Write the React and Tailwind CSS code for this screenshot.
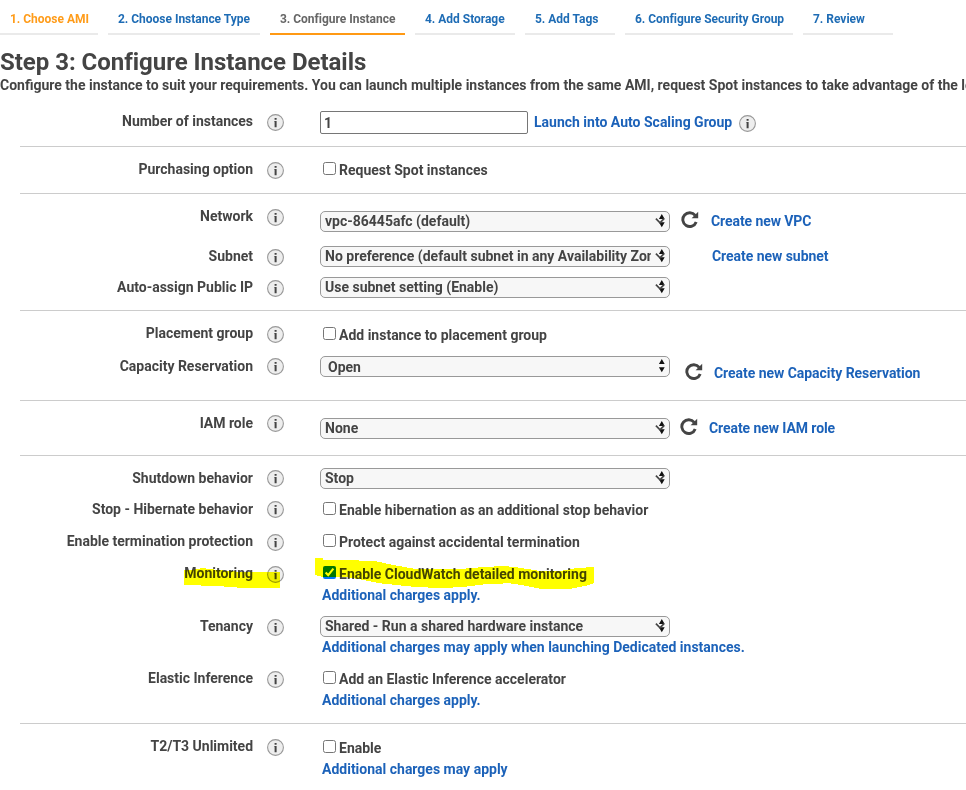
import React from "react";

const steps = [
  { label: "1. Choose AMI", box: "w-[98px] border-[#eaeaea] text-[#ff9c1a]" },
  { label: "2. Choose Instance Type", box: "w-[152px] border-[#eaeaea] text-[#1e6cb5]" },
  { label: "3. Configure Instance", box: "w-[135px] border-[#ff9914] text-[#666]" },
  { label: "4. Add Storage", box: "w-[100px] border-[#eaeaea] text-[#1e6cb5]" },
  { label: "5. Add Tags", box: "w-[90px] border-[#eaeaea] text-[#1e6cb5]" },
  { label: "6. Configure Security Group", box: "w-[168px] border-[#eaeaea] text-[#1e6cb5]" },
  { label: "7. Review", box: "w-[90px] border-[#eaeaea] text-[#1e6cb5]" },
];

function Info({ className = "" }) {
  return (
    <svg className={`h-[17px] w-[17px] shrink-0 ${className}`} viewBox="0 0 17 17">
      <circle cx="8.5" cy="8.5" r="7.9" fill="#eee" stroke="#999" strokeWidth="1.1" />
      <path d="M7.6 4h2v1.8h-2zM7.1 7h2.5v6.3H7.6V7.6h-.5z" fill="#444" />
    </svg>
  );
}

function Refresh({ className = "" }) {
  return (
    <svg className={`h-[18px] w-[18px] shrink-0 ${className}`} viewBox="0 0 18 18">
      <path d="M14.2 4.4A6.9 6.9 0 1 0 15.2 11" fill="none" stroke="#444" strokeWidth="2.9" />
      <path d="M17.2.8V7.3H10.6z" fill="#444" />
    </svg>
  );
}

function Row({ label, height, iconTop = "mt-[3px]", children }) {
  return (
    <div className={`flex items-start ${height}`}>
      <div className="w-[233px] shrink-0 text-right tracking-[-0.01px]">{label}</div>
      <Info className={`ml-[14px] mr-9 ${iconTop}`} />
      {children}
    </div>
  );
}

function Select({ text, className = "", pad = "pl-1 leading-[18px]", plain = false }) {
  return (
    <div className={`flex h-[21px] w-[350px] shrink-0 items-start rounded-[5px] border border-[#999] bg-[#f7f7f7] ${className}`}>
      <span className={`h-[19px] w-[330px] overflow-hidden whitespace-nowrap ${pad}`}>{text}</span>
      <svg className="ml-[3px] h-[19px] w-[12px] shrink-0" viewBox="0 0 12 19">
        <path d="M7.8 2L10.7 7H4.9zM7.8 15.2L4.9 10.2h5.8z" fill="#111" />
        {!plain && <path d="M1.9 6.7L6 10.8 10.1 6.7" fill="none" stroke="#444" strokeWidth="1.7" />}
      </svg>
    </div>
  );
}

function Check({ text, boxTop, textTop = "mt-px", noteTop = "mt-px", checked = false, note }) {
  return (
    <div className="flex flex-col">
      <label className="flex h-[21px] items-start">
        <input type="checkbox" defaultChecked={checked} className={`ml-[3px] mr-[3px] h-[13px] w-[13px] ${boxTop}`} />
        <span className={textTop}>{text}</span>
      </label>
      {note && <Link className={`ml-0.5 ${noteTop}`}>{note}</Link>}
    </div>
  );
}

function Link({ className = "", children }) {
  return <a className={`whitespace-nowrap text-[#1c62b9] ${className}`}>{children}</a>;
}

function Section({ className, children }) {
  return <section className={`ml-5 border-b border-[#ccc] ${className}`}>{children}</section>;
}

export default function App() {
  return (
    <main className="relative h-[790px] w-[966px] overflow-hidden bg-white font-['Roboto',sans-serif] text-[14px] font-bold leading-5 text-[#444]">
      <nav className="flex h-[35px] gap-2.5 text-[12px] tracking-[-0.02px]">
        {steps.map((s) => (
          <div key={s.label} className={`h-[35px] shrink-0 whitespace-nowrap border-b-2 pl-2.5 pt-[9px] ${s.box}`}>
            {s.label}
          </div>
        ))}
      </nav>
      <h1 className="mt-[13px] h-[27px] text-[24px] font-bold leading-7 tracking-[-0.03px]">Step 3: Configure Instance Details</h1>
      <p className="h-9 whitespace-nowrap">
        Configure the instance to suit your requirements. You can launch multiple instances from the same AMI, request Spot instances to take advantage of the lower pricing
      </p>

      <Section className="h-[36px]">
        <Row label="Number of instances" height="h-[35px]">
          <input
            defaultValue="1"
            className="h-[23px] w-[208px] rounded-[2px] border border-[#767676] bg-white pl-[3px]"
          />
          <Link className="ml-1.5 mt-px">Launch into Auto Scaling Group</Link>
          <Info className="ml-[7px] mt-1" />
        </Row>
      </Section>

      <Section className="h-[47px] pt-3">
        <Row label="Purchasing option" height="h-[34px]">
          <Check text="Request Spot instances" boxTop="mt-[3px]" />
        </Row>
      </Section>

      <Section className="h-[117px] pt-3">
        <Row label="Network" height="h-10">
          <Select text="vpc-86445afc (default)" className="mt-[5px]" />
          <Refresh className="ml-[11px] mt-[5px]" />
          <Link className="ml-3 mt-[5px] tracking-[-0.08px]">Create new VPC</Link>
        </Row>
        <Row label="Subnet" height="h-[31px]">
          <Select text="No preference (default subnet in any Availability Zone)" />
          <Link className="ml-[42px] tracking-[-0.04px]">Create new subnet</Link>
        </Row>
        <Row label="Auto-assign Public IP" height="h-[33px]">
          <Select text="Use subnet setting (Enable)" />
        </Row>
      </Section>

      <Section className="h-[90px] pt-3">
        <Row label="Placement group" height="h-[33px]">
          <Check text="Add instance to placement group" boxTop="mt-1" textTop="mt-0.5" />
        </Row>
        <Row label="Capacity Reservation" height="h-11" iconTop="mt-0.5">
          <Select text="Open" pad="pl-[7px] leading-5" plain />
          <Refresh className="ml-[15px] mt-[7px]" />
          <Link className="ml-[11px] mt-[7px] tracking-[-0.04px]">Create new Capacity Reservation</Link>
        </Row>
      </Section>

      <Section className="h-[55px] pt-3">
        <Row label="IAM role" height="h-[42px]" iconTop="mt-0.5">
          <Select text="None" className="mt-[5px]" />
          <Refresh className="ml-[10px] mt-[5px]" />
          <Link className="ml-[11px] mt-[5px] tracking-[-0.08px]">Create new IAM role</Link>
        </Row>
      </Section>

      <Section className="h-[268px] pt-3">
        <Row label="Shutdown behavior" height="h-[31px]" iconTop="mt-0.5">
          <Select text="Stop" />
        </Row>
        <Row label="Stop - Hibernate behavior" height="h-8" iconTop="mt-0.5">
          <Check text="Enable hibernation as an additional stop behavior" boxTop="mt-[3px]" />
        </Row>
        <Row label="Enable termination protection" height="h-8">
          <Check text="Protect against accidental termination" boxTop="mt-[3px]" />
        </Row>
        <Row label="Monitoring" height="h-[53px]">
          <Check text="Enable CloudWatch detailed monitoring" boxTop="mt-[3px]" checked note="Additional charges apply." />
        </Row>
        <Row label="Tenancy" height="h-[52px]">
          <div className="flex flex-col">
            <Select text="Shared - Run a shared hardware instance" />
            <Link className="ml-0.5">Additional charges may apply when launching Dedicated instances.</Link>
          </div>
        </Row>
        <Row label="Elastic Inference" height="h-[55px]">
          <Check text="Add an Elastic Inference accelerator" boxTop="mt-[3px]" note="Additional charges apply." />
        </Row>
      </Section>

      <section className="ml-5 pt-3">
        <Row label="T2/T3 Unlimited" height="h-[54px]">
          <Check text="Enable" boxTop="mt-1" textTop="mt-0.5" noteTop="mt-0.5" note="Additional charges may apply" />
        </Row>
      </section>

      {/* Yellow marker strokes laid over the Monitoring row */}
      <svg className="pointer-events-none absolute left-[180px] top-[554px] h-[40px] w-[420px] mix-blend-multiply" viewBox="180 554 420 40" shapeRendering="crispEdges">
        <path
          d="M184 570L193 570 202 568 227 571 245 572 280 572.3V588H243L217 586 184 585Z"
          fill="#ff0"
        />
        <path
          d="M315 558H322.5V560H350L377 561.5 393 565 413 568.5 460 569 480 567.3 503 566 515 567 537 570.5 560 571 577 568 594 567V583.3L587 585.5 570 589 543 589.3 527 586 510 583.3 487 584 460 587.3 437 588 413 586.7 380 583.3 360 579.3 343 576.7 323 577 315 575Z"
          fill="#ff0"
        />
      </svg>
    </main>
  );
}
